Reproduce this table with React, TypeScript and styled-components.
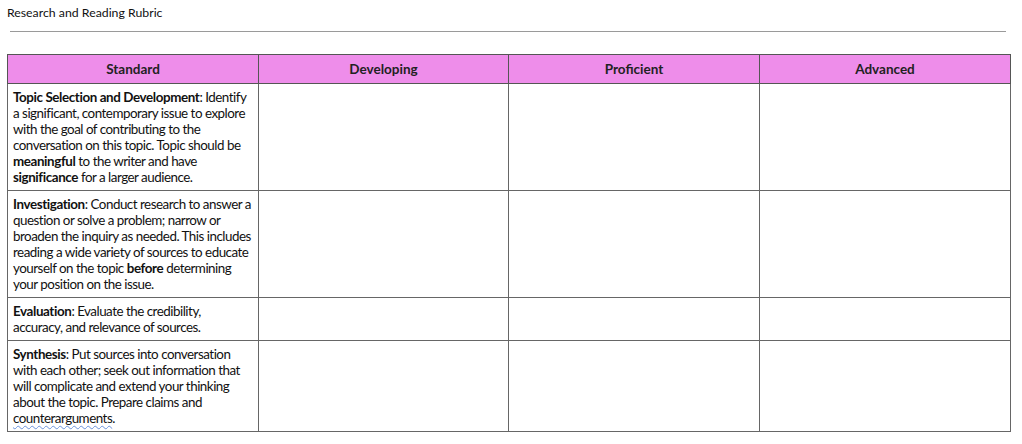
import React from "react";
import styled, { createGlobalStyle } from "styled-components";

const GlobalStyle = createGlobalStyle`
  html, body {
    margin: 0;
    padding: 0;
    background: #ffffff;
  }
  body {
    font-family: Lato, "Open Sans", sans-serif;
    color: #1a1a1a;
  }
`;

type Standard = {
  title: string;
  parts: { text: string; bold?: boolean; squiggle?: boolean }[];
};

const standards: Standard[] = [
  {
    title: "Topic Selection and Development",
    parts: [
      {
        text: ": Identify a significant, contemporary issue to explore with the goal of contributing to the conversation on this topic. Topic should be ",
      },
      { text: "meaningful", bold: true },
      { text: " to the writer and have " },
      { text: "significance", bold: true },
      { text: " for a larger audience." },
    ],
  },
  {
    title: "Investigation",
    parts: [
      {
        text: ": Conduct research to answer a question or solve a problem; narrow or broaden the inquiry as needed. This includes reading a wide variety of sources to educate yourself on the topic ",
      },
      { text: "before", bold: true },
      { text: " determining your position on the issue." },
    ],
  },
  {
    title: "Evaluation",
    parts: [
      { text: ": Evaluate the credibility, accuracy, and relevance of sources." },
    ],
  },
  {
    title: "Synthesis",
    parts: [
      {
        text: ": Put sources into conversation with each other; seek out information that will complicate and extend your thinking about the topic. Prepare claims and ",
      },
      { text: "counterarguments", squiggle: true },
      { text: "." },
    ],
  },
];

const levels = ["Standard", "Developing", "Proficient", "Advanced"];

function App() {
  return (
    <>
      <GlobalStyle />
      <Page>
        <Title>Research and Reading Rubric</Title>
        <Rule />
        <Rubric>
          <colgroup>
            <col style={{ width: "251px" }} />
            <col style={{ width: "250px" }} />
            <col style={{ width: "251px" }} />
            <col style={{ width: "251px" }} />
          </colgroup>
          <thead>
            <tr>
              {levels.map((level) => (
                <HeadCell key={level}>{level}</HeadCell>
              ))}
            </tr>
          </thead>
          <tbody>
            {standards.map((standard) => (
              <tr key={standard.title}>
                <Cell>
                  <b>{standard.title}</b>
                  {standard.parts.map((part, i) =>
                    part.bold ? (
                      <b key={i}>{part.text}</b>
                    ) : part.squiggle ? (
                      <Squiggle key={i}>{part.text}</Squiggle>
                    ) : (
                      <React.Fragment key={i}>{part.text}</React.Fragment>
                    )
                  )}
                </Cell>
                <Cell />
                <Cell />
                <Cell />
              </tr>
            ))}
          </tbody>
        </Rubric>
      </Page>
    </>
  );
}

export default App;

const Page = styled.div`
  display: flex;
  flex-direction: column;
  padding: 6px 7px 0 7px;
`;

const Title = styled.div`
  font-size: 12.3px;
  line-height: 14px;
  color: #111;
`;

const Rule = styled.hr`
  width: 996px;
  margin: 11px 0 22px 3px;
  border: none;
  border-top: 1px solid #9a9a9a;
  height: 0;
`;

const Rubric = styled.table`
  width: 1003px;
  border-collapse: collapse;
  table-layout: fixed;
`;

const HeadCell = styled.th`
  height: 28px;
  padding: 0 5px;
  background: #ee8dea;
  border: 1px solid #555;
  font-size: 13.5px;
  font-weight: 700;
  color: #222;
  text-align: center;
  vertical-align: middle;
`;

const Cell = styled.td`
  padding: 5px 6px 5px 5px;
  border: 1px solid #666;
  font-size: 13.4px;
  letter-spacing: -0.5px;
  line-height: 16px;
  color: #111;
  vertical-align: top;

  b {
    font-weight: 700;
    letter-spacing: -0.4px;
  }
`;

const Squiggle = styled.span`
  text-decoration: underline wavy #6b93dc;
  text-decoration-thickness: 1px;
  text-underline-offset: 2px;
`;
